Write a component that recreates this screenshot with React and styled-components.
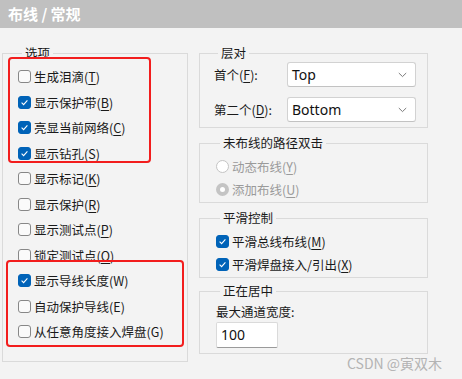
import React from "react";
import styled, { createGlobalStyle } from "styled-components";

const GlobalStyle = createGlobalStyle`
  html, body {
    margin: 0;
    padding: 0;
    background: #f3f3f3;
  }
  body {
    font-family: "Noto Sans CJK SC", "Noto Sans", sans-serif;
    font-size: 12.5px;
    color: #1a1a1a;
  }
`;

const options = [
  { label: "生成泪滴", key: "T", checked: false },
  { label: "显示保护带", key: "B", checked: true },
  { label: "亮显当前网络", key: "C", checked: true },
  { label: "显示钻孔", key: "S", checked: true },
  { label: "显示标记", key: "K", checked: false },
  { label: "显示保护", key: "R", checked: false },
  { label: "显示测试点", key: "P", checked: false },
  { label: "锁定测试点", key: "O", checked: false },
  { label: "显示导线长度", key: "W", checked: true, plain: true },
  { label: "自动保护导线", key: "E", checked: false, plain: true },
  { label: "从任意角度接入焊盘", key: "G", checked: false, plain: true },
];

const Check = ({ checked }) => (
  <Box $checked={checked}>
    {checked && (
      <svg width="9" height="9" viewBox="0 0 9 9">
        <path d="M1.6 4.7 L3.6 6.6 L7.4 2.4" fill="none" stroke="#fff" strokeWidth="1.1" />
      </svg>
    )}
  </Box>
);

const Label = ({ text, k, plain }) => (
  <Text>
    {text}({plain ? k : <u>{k}</u>})
  </Text>
);

const Chevron = () => (
  <svg width="9" height="6" viewBox="0 0 9 6">
    <path d="M0.8 1 L4.5 4.6 L8.2 1" fill="none" stroke="#7a7a7a" strokeWidth="1" />
  </svg>
);

const App = () => {
  return (
    <Page>
      <GlobalStyle />
      <TitleBar>布线 / 常规</TitleBar>
      <Body>
        <OptionsGroup>
          <Legend>选项</Legend>
          {options.map((o) => (
            <CheckRow key={o.key}>
              <Check checked={o.checked} />
              <Label text={o.label} k={o.key} plain={o.plain} />
            </CheckRow>
          ))}
        </OptionsGroup>

        <RightColumn>
          <LayerGroup>
            <Legend>层对</Legend>
            <SelectRow>
              <FieldLabel>
                首个(<u>F</u>):
              </FieldLabel>
              <Select>
                <span>Top</span>
                <Chevron />
              </Select>
            </SelectRow>
            <SelectRow>
              <FieldLabel>
                第二个(<u>D</u>):
              </FieldLabel>
              <Select>
                <span>Bottom</span>
                <Chevron />
              </Select>
            </SelectRow>
          </LayerGroup>

          <RouteGroup>
            <Legend>未布线的路径双击</Legend>
            <SubRow>
              <Radio />
              <Text $disabled>
                动态布线(<u>Y</u>)
              </Text>
            </SubRow>
            <SubRow>
              <Radio $selected />
              <Text $disabled>
                添加布线(<u>U</u>)
              </Text>
            </SubRow>
          </RouteGroup>

          <SmoothGroup>
            <Legend>平滑控制</Legend>
            <SubRow>
              <Check checked />
              <Text>
                平滑总线布线(<u>M</u>)
              </Text>
            </SubRow>
            <SubRow>
              <Check checked />
              <Text>
                平滑焊盘接入/引出(<u>X</u>)
              </Text>
            </SubRow>
          </SmoothGroup>

          <CenterGroup>
            <Legend>正在居中</Legend>
            <InputLabel>最大通道宽度:</InputLabel>
            <NumberBox>100</NumberBox>
          </CenterGroup>
        </RightColumn>
      </Body>

      <Marker style={{ left: 8, top: 57, width: 143, height: 106 }} />
      <Marker style={{ left: 6, top: 260, width: 178, height: 87 }} />
      <Watermark>CSDN @寅双木</Watermark>
    </Page>
  );
};

// ========== ESTILOS ==========
const Page = styled.div`
  position: relative;
  width: 462px;
  height: 379px;
  overflow: hidden;
  background: #f3f3f3;
`;

const TitleBar = styled.div`
  height: 28px;
  background: #c0c0c0;
  color: #fff;
  font-size: 15px;
  font-weight: bold;
  line-height: 28px;
  padding-left: 8px;
`;

const Body = styled.div`
  display: flex;
  align-items: flex-start;
  padding: 17px 0 0 2px;
  gap: 11px;
`;

const Group = styled.fieldset`
  margin: 0;
  border: 1px solid #dadada;
  padding: 0;
  min-width: 0;
`;

const Legend = styled.legend`
  margin-left: 4px;
  padding: 0 3px;
  font-size: 12.5px;
  line-height: 16px;
  color: #1a1a1a;
`;

const OptionsGroup = styled(Group)`
  box-sizing: border-box;
  width: 186px;
  padding: 3px 0 16px 15px;
`;

const CheckRow = styled.div`
  display: flex;
  align-items: center;
  gap: 3px;
  height: 25.5px;
`;

const Text = styled.span`
  font-size: 12.5px;
  line-height: 17px;
  white-space: nowrap;
  color: ${(p) => (p.$disabled ? "#9a9a9a" : "#1a1a1a")};
  u {
    text-underline-offset: 2px;
  }
`;

const Box = styled.span`
  flex: none;
  width: 13px;
  height: 13px;
  box-sizing: border-box;
  border-radius: 3px;
  display: flex;
  align-items: center;
  justify-content: center;
  background: ${(p) => (p.$checked ? "#0063b8" : "#fafafa")};
  border: 1px solid ${(p) => (p.$checked ? "#0063b8" : "#878787")};
`;

const Radio = styled.span`
  flex: none;
  width: 13px;
  height: 13px;
  box-sizing: border-box;
  border-radius: 50%;
  background: #fff;
  border: ${(p) => (p.$selected ? "4px solid #c4c4c4" : "1px solid #c4c4c4")};
`;

const RightColumn = styled.div`
  display: flex;
  flex-direction: column;
  width: 229px;
`;

const LayerGroup = styled(Group)`
  padding: 1px 11px 5px 14px;
  display: flex;
  flex-direction: column;
  gap: 10px;
`;

const SelectRow = styled.div`
  display: flex;
  align-items: center;
`;

const FieldLabel = styled.span`
  width: 73px;
  font-size: 12.5px;
  line-height: 17px;
  white-space: nowrap;
  u {
    text-underline-offset: 2px;
  }
`;

const Select = styled.div`
  flex: 1;
  height: 25px;
  box-sizing: border-box;
  background: #fff;
  border: 1px solid #d2d2d2;
  border-bottom-color: #c2c2c2;
  border-radius: 3px;
  display: flex;
  align-items: center;
  justify-content: space-between;
  padding: 0 8px 0 4px;
  font-family: "Noto Sans", sans-serif;
  font-size: 14px;
  color: #111;
`;

const RouteGroup = styled(Group)`
  margin-top: 7px;
  padding: 4px 0 1px 16px;
`;

const SubRow = styled.div`
  display: flex;
  align-items: center;
  gap: 3px;
  height: 23px;
`;

const SmoothGroup = styled(Group)`
  margin-top: 7px;
  padding: 4px 0 1px 16px;
`;

const CenterGroup = styled(Group)`
  margin-top: 5px;
  padding: 4px 0 5px 16px;
`;

const InputLabel = styled.div`
  font-size: 12.5px;
  line-height: 17px;
  margin-bottom: 2px;
`;

const NumberBox = styled.div`
  width: 62px;
  height: 26px;
  box-sizing: border-box;
  background: #fff;
  border: 1px solid #dadada;
  border-bottom-color: #9a9a9a;
  border-radius: 2px;
  padding-left: 4px;
  line-height: 24px;
  font-family: "Noto Sans", sans-serif;
  font-size: 14px;
  color: #111;
`;

const Marker = styled.div`
  position: absolute;
  box-sizing: border-box;
  border: 2px solid #f21d1d;
  border-radius: 4px;
  pointer-events: none;
`;

const Watermark = styled.div`
  position: absolute;
  left: 347px;
  top: 354px;
  font-family: "Noto Sans CJK SC", "Noto Sans", sans-serif;
  font-size: 14px;
  line-height: 18px;
  color: #b4b4b4;
  white-space: nowrap;
`;

export default App;
